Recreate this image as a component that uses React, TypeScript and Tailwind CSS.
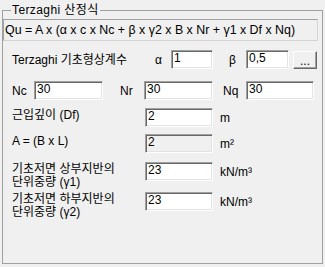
import React from 'react'

const font = { fontFamily: '"Liberation Sans", "Noto Sans CJK KR", sans-serif' }

const edit =
  'h-[19px] border border-t-[#a0a0a0] border-l-[#a0a0a0] border-r-white border-b-white shadow-[inset_1px_1px_0_#696969,inset_-1px_-1px_0_#e3e3e3] px-[2px] pb-[3px] text-[12px] text-black outline-none'

const Edit = ({ value, width, disabled }: { value: string; width: string; disabled?: boolean }) => (
  <input
    readOnly
    value={value}
    className={`${edit} ${width} ${disabled ? 'bg-[#f0f0f0]' : 'bg-white'}`}
    style={font}
  />
)

const UnitRow = ({ label, value, unit, disabled }: { label: React.ReactNode; value: string; unit: React.ReactNode; disabled?: boolean }) => (
  <div className="flex items-start">
    <div className="ml-[9px] w-[133px] text-[12px] leading-[13px] pt-[1px]">{label}</div>
    <div className="flex items-center">
      <Edit value={value} width="w-[68px]" disabled={disabled} />
      <span className="ml-[7px] text-[12px]">{unit}</span>
    </div>
  </div>
)

const App = () => {
  return (
    <div className="w-[325px] h-[267px] bg-[#f0f0f0] pt-[3px] pl-[2px] text-black" style={font}>
      <fieldset className="w-[321px] h-[261px] border border-[#a0a0a0]">
        <legend className="ml-[8px] px-[1px] text-[12px] leading-[14px] tracking-[0.4px]">Terzaghi 산정식</legend>

        <div className="mt-[2px] w-[315px] h-[22px] flex items-center pl-[1px] border border-t-[#a0a0a0] border-l-[#a0a0a0] border-r-[#d4d4d4] border-b-[#d4d4d4] text-[12.4px] whitespace-nowrap">
          Qu = A x (α x c x Nc + β x γ2 x B x Nr + γ1 x Df x Nq)
        </div>

        <div className="mt-[9px] flex items-center text-[12px]">
          <span className="ml-[9px] w-[143px]">Terzaghi 기초형상계수</span>
          <span className="w-[16px]">α</span>
          <Edit value="1" width="w-[42px]" />
          <span className="ml-[16px] w-[17px]">β</span>
          <Edit value="0,5" width="w-[43px]" />
          <button className="ml-[4px] w-[24px] h-[18px] bg-[#f0f0f0] border border-t-white border-l-white border-r-[#696969] border-b-[#696969] shadow-[inset_-1px_-1px_0_#a0a0a0] text-[12px] leading-[12px] pt-[2px]">
            ...
          </button>
        </div>

        <div className="mt-[12px] flex items-center text-[12px]">
          <span className="ml-[9px] w-[22px]">Nc</span>
          <Edit value="30" width="w-[69px]" />
          <span className="ml-[17px] w-[24px]">Nr</span>
          <Edit value="30" width="w-[69px]" />
          <span className="ml-[10px] w-[23px]">Nq</span>
          <Edit value="30" width="w-[68px]" />
        </div>

        <div className="mt-[8px] flex flex-col">
          <UnitRow label="근입깊이 (Df)" value="2" unit="m" />
          <div className="mt-[7px]">
            <UnitRow label="A = (B x L)" value="2" unit="m²" disabled />
          </div>
          <div className="mt-[9px]">
            <UnitRow
              label={<>기초저면 상부지반의<br />단위중량 (γ1)</>}
              value="23"
              unit="kN/m³"
            />
          </div>
          <div className="mt-[3px]">
            <UnitRow
              label={<>기초저면 하부지반의<br />단위중량 (γ2)</>}
              value="23"
              unit="kN/m³"
            />
          </div>
        </div>
      </fieldset>
    </div>
  )
}

export default App
